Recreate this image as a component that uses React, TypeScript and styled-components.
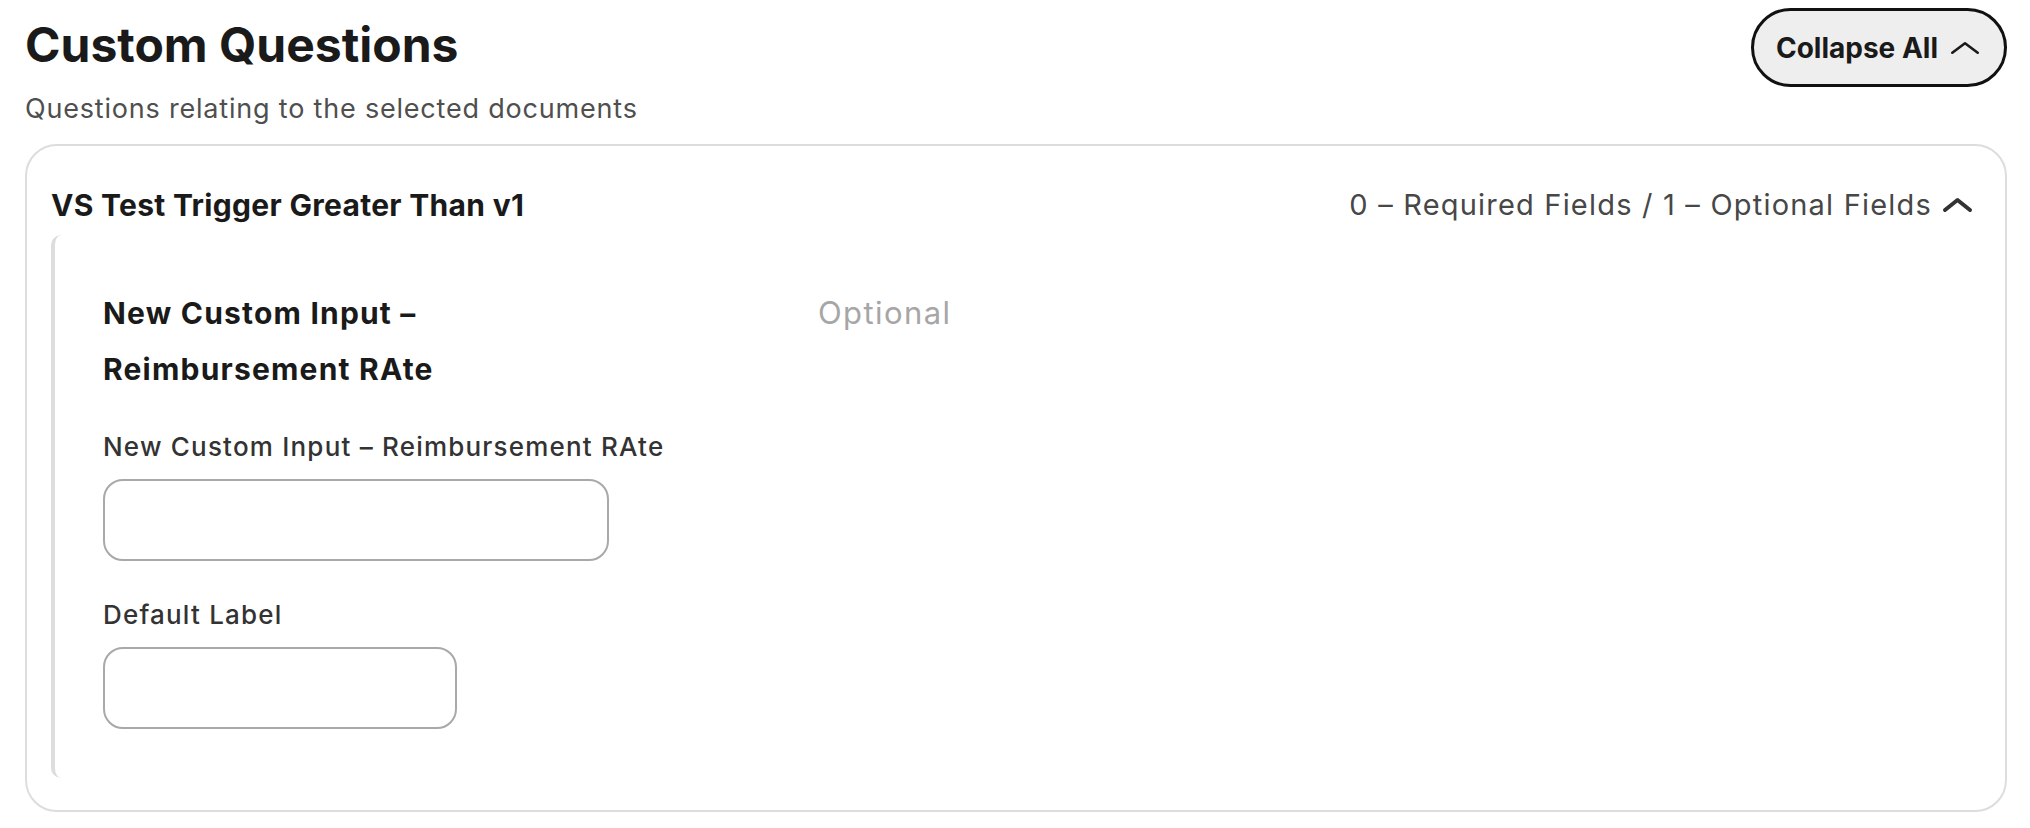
import styled, { createGlobalStyle } from "styled-components";

const GlobalStyle = createGlobalStyle`
  body {
    margin: 0;
    background: #ffffff;
    font-family: Inter, "Noto Sans", sans-serif;
    color: #1a1a1a;
  }
`;

const Page = styled.div`
  padding: 8px 23px 16px 25px;
`;

const TopBar = styled.div`
  display: flex;
  justify-content: space-between;
  align-items: flex-start;
`;

const Heading = styled.div`
  padding-top: 8px;
`;

const Title = styled.h1`
  margin: 0;
  font-size: 48px;
  line-height: 58px;
  font-weight: 700;
  color: #1a1a1a;
`;

const Subtitle = styled.p`
  margin: 20px 0 0;
  font-size: 27px;
  line-height: 30px;
  letter-spacing: 0.8px;
  color: #4f4f4f;
`;

const CollapseButton = styled.button`
  display: flex;
  align-items: center;
  gap: 12px;
  height: 79px;
  padding: 0 24px 0 22px;
  border: 3px solid #111;
  border-radius: 40px;
  background: #eeeeee;
  font-family: inherit;
  font-size: 28px;
  font-weight: 700;
  color: #1a1a1a;
  cursor: pointer;
`;

const Card = styled.section`
  margin-top: 20px;
  border: 2px solid #dddddd;
  border-radius: 32px;
  padding: 42px 32px 32px 24px;
`;

const CardHeader = styled.div`
  display: flex;
  justify-content: space-between;
  align-items: center;
`;

const CardTitle = styled.h2`
  margin: 0;
  font-size: 30px;
  line-height: 34px;
  font-weight: 700;
  letter-spacing: 0.3px;
`;

const FieldCount = styled.div`
  display: flex;
  align-items: center;
  gap: 10px;
  font-size: 29px;
  line-height: 34px;
  letter-spacing: 1.2px;
  color: #474747;
`;

const Body = styled.div`
  margin-top: 13px;
  border-left: 4px solid #dddddd;
  border-radius: 10px 0 0 10px;
  padding: 50px 0 49px 48px;
`;

const QuestionRow = styled.div`
  display: grid;
  grid-template-columns: 715px 1fr;
`;

const QuestionTitle = styled.h3`
  margin: 0;
  max-width: 460px;
  font-size: 30px;
  line-height: 56px;
  font-weight: 700;
  letter-spacing: 1.2px;
`;

const Tag = styled.span`
  font-size: 31px;
  line-height: 56px;
  letter-spacing: 1.4px;
  color: #a6a6a6;
`;

const Field = styled.div<{ $gap: number }>`
  margin-top: ${(p) => p.$gap}px;
  display: flex;
  flex-direction: column;
  gap: 17px;
`;

const Label = styled.label`
  font-size: 26px;
  line-height: 30px;
  font-weight: 500;
  letter-spacing: 1.2px;
  color: #333333;
`;

const TextBox = styled.input<{ $width: number }>`
  box-sizing: border-box;
  width: ${(p) => p.$width}px;
  height: 82px;
  border: 2px solid #a9a9a6;
  border-radius: 20px;
  background: #fff;
  font-family: inherit;
  font-size: 24px;
  padding: 0 20px;
  outline: none;
`;

const Chevron = ({ w, h, stroke, color }: { w: number; h: number; stroke: number; color: string }) => (
  <svg width={w} height={h} viewBox={`0 0 ${w} ${h}`} fill="none">
    <polyline
      points={`${stroke / 2 + 1},${h - stroke / 2 - 1} ${w / 2},${stroke / 2 + 1} ${w - stroke / 2 - 1},${h - stroke / 2 - 1}`}
      stroke={color}
      strokeWidth={stroke}
      strokeLinecap="round"
      strokeLinejoin="round"
    />
  </svg>
);

export default function App() {
  return (
    <>
      <GlobalStyle />
      <Page>
        <TopBar>
          <Heading>
            <Title>Custom Questions</Title>
            <Subtitle>Questions relating to the selected documents</Subtitle>
          </Heading>
          <CollapseButton>
            Collapse All
            <Chevron w={30} h={14} stroke={2.6} color="#1a1a1a" />
          </CollapseButton>
        </TopBar>

        <Card>
          <CardHeader>
            <CardTitle>VS Test Trigger Greater Than v1</CardTitle>
            <FieldCount>
              0 – Required Fields / 1 – Optional Fields
              <Chevron w={31} h={16} stroke={4} color="#333333" />
            </FieldCount>
          </CardHeader>

          <Body>
            <QuestionRow>
              <QuestionTitle>New Custom Input – Reimbursement RAte</QuestionTitle>
              <Tag>Optional</Tag>
            </QuestionRow>

            <Field $gap={35}>
              <Label>New Custom Input – Reimbursement RAte</Label>
              <TextBox $width={506} />
            </Field>

            <Field $gap={39}>
              <Label>Default Label</Label>
              <TextBox $width={354} />
            </Field>
          </Body>
        </Card>
      </Page>
    </>
  );
}
